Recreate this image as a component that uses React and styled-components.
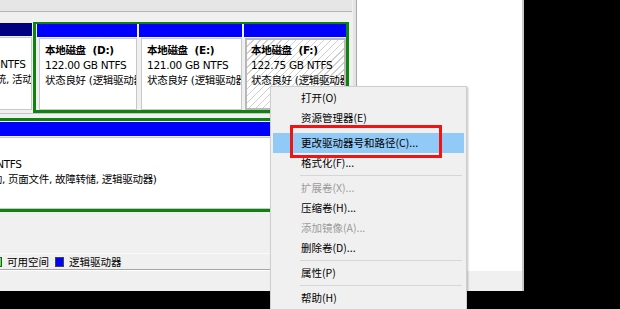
import React from "react";
import styled, { createGlobalStyle, css } from "styled-components";

const GlobalStyle = createGlobalStyle`
  html, body { margin: 0; padding: 0; background: #000; }
  body {
    width: 620px; height: 309px; overflow: hidden;
    font-family: "DejaVu Sans", "Noto Sans CJK SC", sans-serif;
  }
  * { box-sizing: border-box; }
`;

const Stage = styled.div`
  position: relative;
  width: 620px;
  height: 309px;
  overflow: hidden;
  background: #000;
`;

const Window = styled.div`
  width: 524px;
  height: 291px;
  display: flex;
  flex-direction: column;
  background: #f0f0f0;
  border-right: 2px solid #c8c8c8;
`;

const Main = styled.div`
  flex: 1;
  display: flex;
  min-height: 0;
`;

const DiskPane = styled.div`
  width: 357px;
  display: flex;
  flex-direction: column;
  overflow: hidden;
  background: #f0f0f0;
  border-right: 1px solid #a8a8a8;
  box-shadow: inset -3px 0 0 #e4e4e4;
`;

const SidePane = styled.div`
  flex: 1;
  background: #fff;
`;

const TopStrip = styled.div`
  height: 12px;
  flex: none;
  background: #e6e6e6;
  border-bottom: 1px solid #b4b4b4;
  margin-right: 4px;
`;

const DiskArea = styled.div`
  flex: 1;
  padding-top: 6px;
  display: flex;
  flex-direction: column;
`;

const DiskRow = styled.div`
  display: flex;
  align-items: flex-start;
  padding-top: 4px;
  margin-left: ${(p) => p.$shift}px;
  ${(p) => p.$divider && css`border-bottom: 1px solid #c4c4c4;`}
`;

const Frame = styled.div`
  display: flex;
  gap: 2px;
  margin-left: ${(p) => p.$gap || 0}px;
  border: 3px solid #0f820f;
  border-top-width: ${(p) => p.$top}px;
  padding: ${(p) => p.$pad};
  width: ${(p) => p.$width}px;
  flex: none;
`;

const Partition = styled.div`
  display: flex;
  flex-direction: column;
  width: ${(p) => p.$width}px;
  margin-top: ${(p) => p.$offset || 0}px;
  flex: none;
`;

const PartHeader = styled.div`
  height: ${(p) => p.$h}px;
  background: ${(p) => p.$color};
  flex: none;
`;

const PartBody = styled.div`
  height: ${(p) => p.$h}px;
  margin: 1px 0 0 ${(p) => p.$inset}px;
  background: #fff;
  border: 1px solid #c8c8c8;
  padding: 4px 0 0 5px;
  overflow: hidden;
  white-space: nowrap;
  font-family: "DejaVu Sans", "Noto Sans CJK SC", sans-serif;
  font-size: 10.5px;
  letter-spacing: -0.3px;
  line-height: 15px;
  color: #000;
  ${(p) =>
    p.$selected &&
    css`
      border: 2px solid #b8b8b8;
      padding: 3px 0 0 4px;
      background: repeating-linear-gradient(
        135deg,
        #fff 0px,
        #fff 4px,
        #cfcfcf 4px,
        #cfcfcf 5px
      );
    `}
`;

const Title = styled.div`
  font-weight: 700;
  white-space: pre;
`;

const Line = styled.div``;

const Legend = styled.div`
  height: 17px;
  flex: none;
  display: flex;
  align-items: center;
  gap: 5px;
  margin-left: -7px;
  margin-right: 4px;
  border-top: 1px solid #fafafa;
  border-bottom: 1px solid #a6a6a6;
  font-family: "Noto Sans CJK SC", sans-serif;
  font-size: 10.5px;
  color: #000;
`;

const Swatch = styled.span`
  width: 9px;
  height: 10px;
  background: ${(p) => p.$color};
  border: 1px solid #444;
  flex: none;
`;

const LegendText = styled.span`
  margin-right: 1px;
`;

const StatusBar = styled.div`
  height: 21px;
  flex: none;
  background: #f0f0f0;
  border-top: 1px solid #ffffff;
`;

const Menu = styled.div`
  position: absolute;
  left: 270px;
  top: 86px;
  width: 197px;
  height: 240px;
  background: #f0f0f0;
  border: 1px solid #cfcfcf;
  box-shadow: 1px 1px 2px rgba(0, 0, 0, 0.25);
  padding: 1px 2px;
  font-family: "Noto Sans CJK SC", sans-serif;
  font-size: 10.5px;
`;

const Item = styled.div`
  height: 20px;
  line-height: 20px;
  padding-left: 28px;
  color: ${(p) => (p.$disabled ? "#9b9b9b" : "#000")};
  background: ${(p) => (p.$active ? "#91c9f7" : "transparent")};
`;

const Sep = styled.div`
  height: 1px;
  margin: 2px 2px 2px 27px;
  background: ${(p) => (p.$blank ? "transparent" : "#d6d6d6")};
`;

const Annotation = styled.div`
  position: absolute;
  left: 290px;
  top: 125px;
  width: 152px;
  height: 33px;
  border: 3px solid #f01414;
`;

const Text = ({ lines, title }) => (
  <>
    <Title>{title}</Title>
    {lines.map((l, i) => (
      <Line key={i}>{l}</Line>
    ))}
  </>
);

export default function App() {
  return (
    <>
      <GlobalStyle />
      <Stage>
        <Window>
          <Main>
            <DiskPane>
              <TopStrip />
              <DiskArea>
                <DiskRow $shift={-68} $divider>
                  <Partition $width={100} $offset={1}>
                    <PartHeader $h={13} $color="#000080" />
                    <PartBody $h={73} $inset={0}>
                      <Text
                        title="系统保留"
                        lines={["1000.00 GB NTFS", "状态良好 (系统, 活动, 主分区)"]}
                      />
                    </PartBody>
                  </Partition>
                  <Frame $gap={1} $top={2} $pad="0 0 0 1px" $width={316}>
                    <Partition $width={100}>
                      <PartHeader $h={13} $color="#0000ff" />
                      <PartBody $h={72} $inset={2}>
                        <Text
                          title="本地磁盘  (D:)"
                          lines={["122.00 GB NTFS", "状态良好 (逻辑驱动器)"]}
                        />
                      </PartBody>
                    </Partition>
                    <Partition $width={103}>
                      <PartHeader $h={13} $color="#0000ff" />
                      <PartBody $h={72} $inset={2}>
                        <Text
                          title="本地磁盘  (E:)"
                          lines={["121.00 GB NTFS", "状态良好 (逻辑驱动器)"]}
                        />
                      </PartBody>
                    </Partition>
                    <Partition $width={102}>
                      <PartHeader $h={13} $color="#0000ff" />
                      <PartBody $h={72} $inset={1} $selected>
                        <Text
                          title="本地磁盘  (F:)"
                          lines={["122.75 GB NTFS", "状态良好 (逻辑驱动器)"]}
                        />
                      </PartBody>
                    </Partition>
                  </Frame>
                </DiskRow>
                <DiskRow $shift={-78}>
                  <Frame $top={3} $pad="1px 0 0 1px" $width={480}>
                    <Partition $width={470}>
                      <PartHeader $h={14} $color="#0000ff" />
                      <PartBody $h={72} $inset={2}>
                        <Text
                          title="(C:)"
                          lines={[
                            "1863.01 GB NTFS",
                            "状态良好 (启动, 页面文件, 故障转储, 逻辑驱动器)",
                          ]}
                        />
                      </PartBody>
                    </Partition>
                  </Frame>
                </DiskRow>
              </DiskArea>
              <Legend>
                <Swatch $color="#33ff33" />
                <LegendText>可用空间</LegendText>
                <Swatch $color="#0000ff" />
                <LegendText>逻辑驱动器</LegendText>
              </Legend>
            </DiskPane>
            <SidePane />
          </Main>
          <StatusBar />
        </Window>

        <Menu>
          <Item>打开(O)</Item>
          <Item>资源管理器(E)</Item>
          <Sep $blank />
          <Item $active>更改驱动器号和路径(C)...</Item>
          <Item>格式化(F)...</Item>
          <Sep />
          <Item $disabled>扩展卷(X)...</Item>
          <Item>压缩卷(H)...</Item>
          <Item $disabled>添加镜像(A)...</Item>
          <Item>删除卷(D)...</Item>
          <Sep />
          <Item>属性(P)</Item>
          <Sep />
          <Item>帮助(H)</Item>
        </Menu>
        <Annotation />
      </Stage>
    </>
  );
}
